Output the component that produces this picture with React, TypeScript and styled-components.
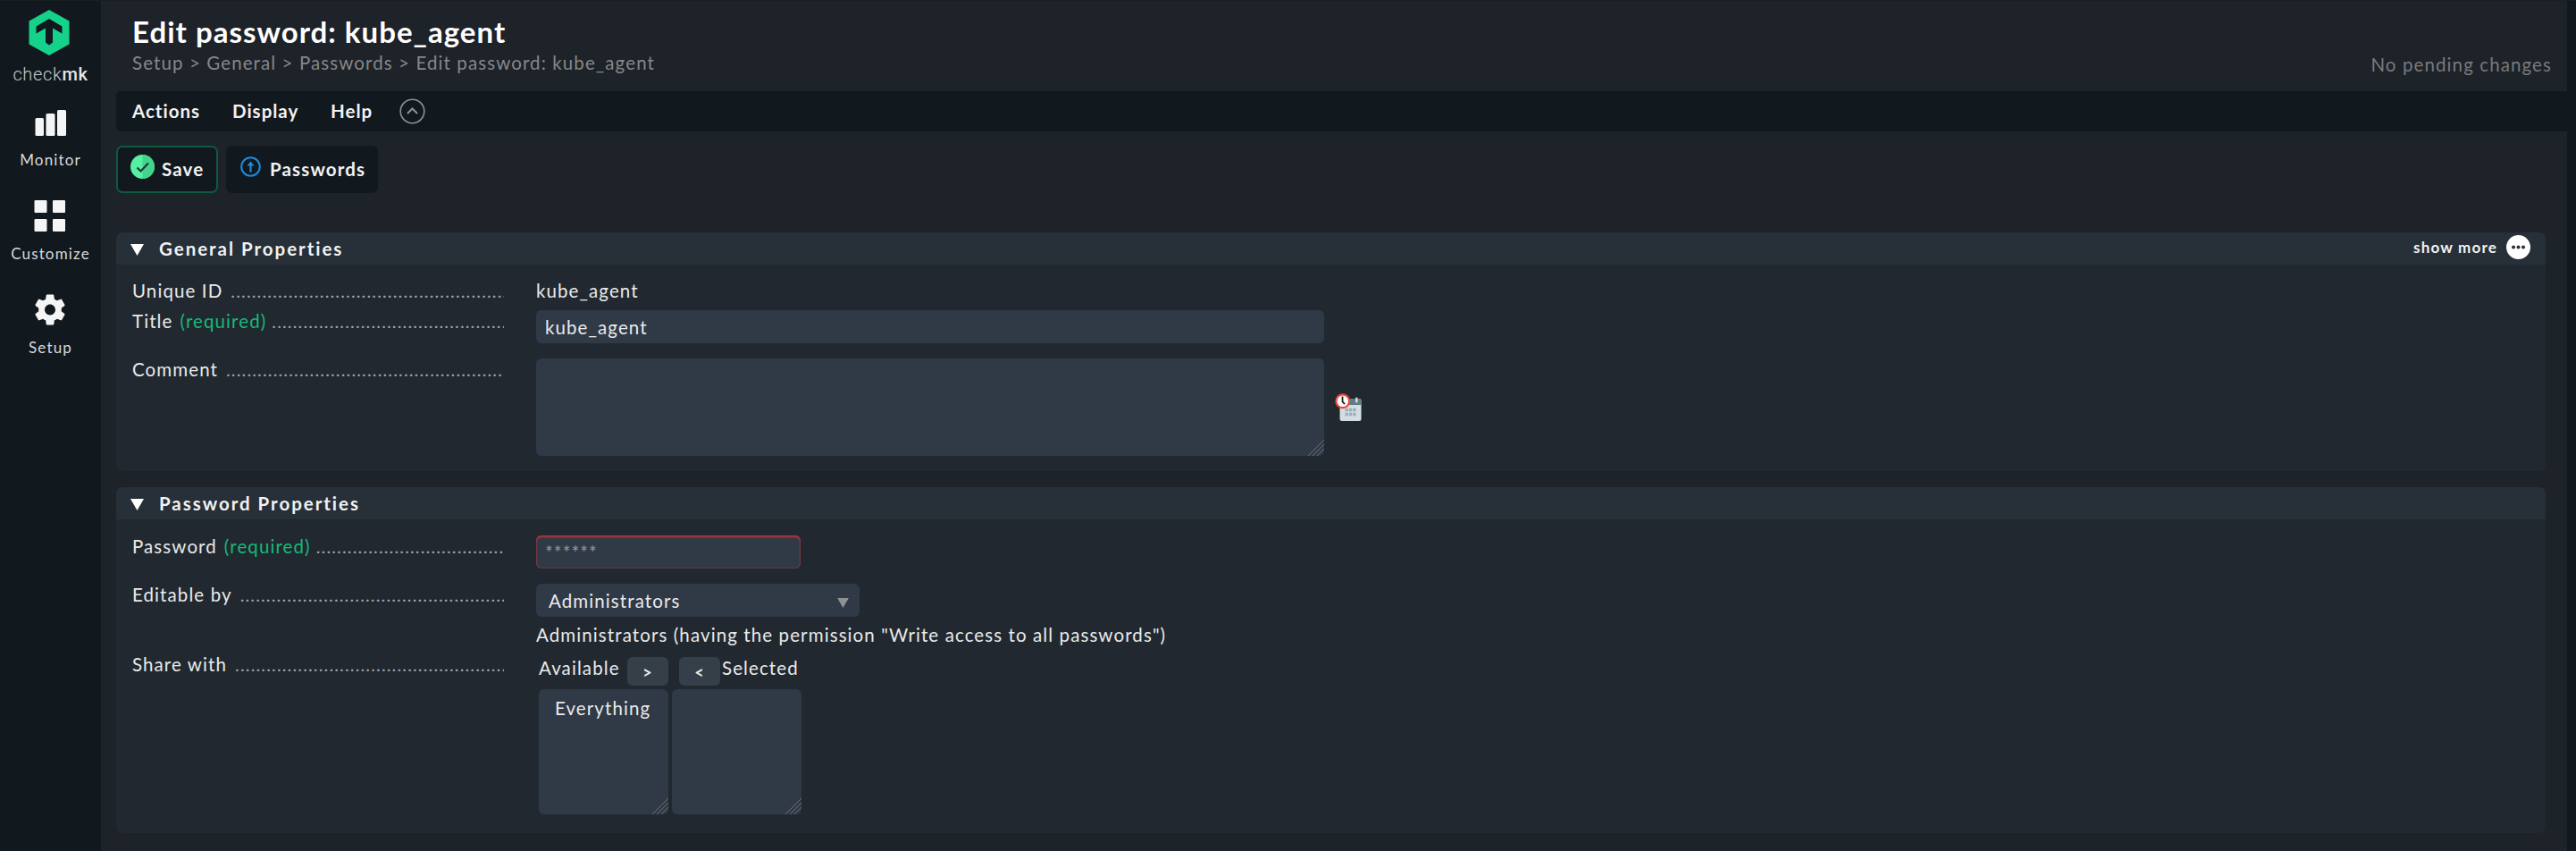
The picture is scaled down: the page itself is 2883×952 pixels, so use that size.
import React from 'react';
import styled, { createGlobalStyle } from 'styled-components';

const GlobalStyle = createGlobalStyle`
  * { box-sizing: border-box; }
  body {
    margin: 0;
    background: #11181e;
    color: #e8eaeb;
    font: 400 20.5px/24px Lato, sans-serif;
    letter-spacing: 1.1px;
  }
  input, select, textarea, button { font: inherit; letter-spacing: inherit; color: inherit; margin: 0; }
`;

const Page = styled.div`
  display: flex;
  height: 952px;
  border-top: 1px solid #1b1f22;
  overflow: hidden;
`;

const Sidebar = styled.nav`
  width: 113px;
  flex: none;
  display: flex;
  flex-direction: column;
  align-items: center;
  background: #11181e;
`;

const Logo = styled.div`
  height: 115px;
  padding-top: 10px;
  display: flex;
  flex-direction: column;
  align-items: center;
  svg { display: block; margin-right: 3px; }
`;

const Wordmark = styled.div`
  margin-top: 9px;
  font: 300 20px/24px Roboto, sans-serif;
  letter-spacing: 0.65px;
  color: #c9cccd;
  b { font-weight: 500; color: #e6e6e6; }
`;

const NavItem = styled.a`
  height: 105px;
  display: flex;
  flex-direction: column;
  align-items: center;
  font-size: 17px;
  line-height: 20px;
  letter-spacing: 1.15px;
  color: #d8dadb;
  svg { display: block; margin-bottom: 12px; }
`;

const Main = styled.main`
  flex: 1;
  min-width: 0;
  display: flex;
  flex-direction: column;
  margin-right: 10px;
  padding-left: 17px;
  background: #1e2229;
`;

const Header = styled.header`
  height: 101px;
  flex: none;
  display: flex;
  justify-content: space-between;
  padding: 14px 17px 0 18px;
`;

const PageTitle = styled.h1`
  margin: 0;
  font-size: 33px;
  line-height: 40px;
  font-weight: 700;
  letter-spacing: 1.02px;
  color: #fff;
`;

const Breadcrumb = styled.div`
  margin-top: 3px;
  color: #85888a;
`;

const Pending = styled.div`
  margin-top: 45px;
  color: #777b7d;
`;

const MenuBar = styled.div`
  height: 45px;
  flex: none;
  display: flex;
  align-items: center;
  padding: 0 18px;
  margin-right: -10px;
  border-radius: 5px 0 0 5px;
  background: #11181e;
  font-weight: 700;
  color: #f2f2f2;
  svg { display: block; }
`;

const MenuEntry = styled.span<{ $width: number }>`
  width: ${(p) => p.$width}px;
  margin-top: -1px;
  letter-spacing: 1px;
`;

const Buttons = styled.div`
  display: flex;
  gap: 9px;
  padding-top: 16px;
  height: 113px;
  flex: none;
`;

const ShortcutButton = styled.a<{ $primary?: boolean }>`
  width: ${(p) => (p.$primary ? 114 : 170)}px;
  height: 53px;
  display: flex;
  align-items: flex-start;
  gap: ${(p) => (p.$primary ? 8 : 10)}px;
  padding: ${(p) => (p.$primary ? '8px 0 0 14px' : '10px 0 0 14px')};
  border: 2px solid ${(p) => (p.$primary ? '#0e5a40' : '#11181e')};
  border-radius: 7px;
  background: #11181e;
  font-weight: 700;
  letter-spacing: 1.15px;
  color: #f2f2f2;
  span { margin-top: ${(p) => (p.$primary ? 4 : 2)}px; }
`;

const Section = styled.section<{ $height: number }>`
  width: 2719px;
  height: ${(p) => p.$height}px;
  flex: none;
  margin-bottom: 18px;
  border-radius: 7px;
  overflow: hidden;
  background: #21282f;
`;

const SectionHead = styled.div`
  height: 36px;
  display: flex;
  align-items: center;
  padding: 0 17px 0 16px;
  background: #272f38;
  svg { display: block; }
  > svg { margin-top: 3px; }
`;

const SectionTitle = styled.h2`
  margin: 0 auto 0 17px;
  font-size: 20.5px;
  line-height: 24px;
  font-weight: 700;
  letter-spacing: 1.97px;
  color: #f2f2f2;
`;

const ShowMore = styled.div`
  display: flex;
  align-items: center;
  gap: 10px;
  font-size: 17px;
  font-weight: 700;
  letter-spacing: 1.18px;
  margin-top: -3px;
  color: #f2f2f2;
`;

const Rows = styled.div<{ $top: number }>`
  display: flex;
  flex-direction: column;
  padding: ${(p) => p.$top}px 0 0 18px;
`;

const Row = styled.div<{ $gap: number }>`
  display: flex;
  align-items: flex-start;
  margin-bottom: ${(p) => p.$gap}px;
`;

const Legend = styled.div`
  width: 416px;
  margin-right: 36px;
  flex: none;
  display: flex;
  white-space: nowrap;
`;

const Required = styled.span`
  margin-left: 8px;
  color: #17b978;
`;

const Dots = styled.span<{ $gap: number }>`
  flex: 1;
  overflow: hidden;
  margin-left: ${(p) => p.$gap}px;
  font-size: 20px;
  letter-spacing: 1.13px;
  color: #a2a5a7;
`;

const TextInput = styled.input<{ $width: number }>`
  display: block;
  width: ${(p) => p.$width}px;
  height: 37px;
  padding: 0 0 0 10px;
  border: 0;
  border-radius: 6px;
  outline: 0;
  background: #303946;
`;

const PasswordInput = styled(TextInput)`
  box-shadow: inset 0 2px 2px #b5363b, inset 0 0 2px #c04045;
  &::placeholder { color: #92979c; opacity: 1; }
`;

const Resizable = styled.div<{ $w: number; $h: number }>`
  display: flex;
  width: ${(p) => p.$w}px;
  height: ${(p) => p.$h}px;
  padding: 9px 0 0 18px;
  border-radius: 6px;
  overflow: hidden;
  background: #303946;
  span { flex: 1; }
  svg { display: block; flex: none; align-self: flex-end; margin-left: -18px; }
`;

const CommentCell = styled.div`
  display: flex;
  align-items: center;
  gap: 12px;
  svg { display: block; }
`;

const Dropdown = styled.div`
  width: 362px;
  height: 37px;
  display: flex;
  align-items: center;
  justify-content: space-between;
  padding: 0 12px 0 14px;
  border-radius: 6px;
  background: #303946;
  svg { display: block; margin-top: 6px; }
`;

const Note = styled.div`
  margin-top: 8px;
`;

const Transfer = styled.div`
  display: grid;
  grid-template-columns: 145px 145px;
  column-gap: 4px;
  padding: 4px 0 0 3px;
`;

const TransferHead = styled.div<{ $offset?: number }>`
  height: 36px;
  display: flex;
  align-items: flex-start;
  padding-left: ${(p) => p.$offset ?? 0}px;
  white-space: nowrap;
`;

const MoveButton = styled.button<{ $before?: boolean }>`
  width: 46px;
  height: 32px;
  flex: none;
  padding: 1px 0 0;
  margin-left: ${(p) => (p.$before ? 0 : 'auto')};
  margin-right: ${(p) => (p.$before ? 2 : 0)}px;
  border: 0;
  border-radius: 6px;
  background: #343f49;
  font-size: 18px;
  font-weight: 700;
  line-height: 28px;
`;

const Grip = () => (
  <svg width="18" height="18" viewBox="0 0 18 18" stroke="#6b7078" strokeWidth="1">
    <path d="M-1 19L19 -1M4 19L19 4M9 19L19 9M14 19L19 14" />
  </svg>
);

const Triangle = ({ w = 15, h = 13, fill = '#fff' }) => (
  <svg width={w} height={h} viewBox="0 0 15 13">
    <path d="M0 0H15L7.5 13Z" fill={fill} />
  </svg>
);

type LabelProps = { text: string; dots: number; required?: boolean };

const Label = ({ text, dots, required }: LabelProps) => (
  <Legend>
    {text}
    {required && <Required>(required)</Required>}
    <Dots $gap={required ? 6 : 9} aria-hidden>{'.'.repeat(dots)}</Dots>
  </Legend>
);

export default function App() {
  return (
    <Page>
      <GlobalStyle />
      <Sidebar>
        <Logo>
          <svg width="46" height="51" viewBox="0 0 46 51">
            <path d="M23 0L45.5 12.5V38.5L23 51L.5 38.5V12.5Z" fill="#15d18a" />
            <path d="M23 10L37.5 18.5V26.5L27 20.5V36.5L23 39.5L19 36.5V20.5L8.5 26.5V18.5Z" fill="#11181e" />
          </svg>
          <Wordmark>check<b>mk</b></Wordmark>
        </Logo>
        <NavItem>
          <svg width="36" height="41" viewBox="0 0 36 41" fill="#f5f5f5">
            <rect x="0.5" y="16" width="9.5" height="20" rx="1.5" />
            <rect x="12.5" y="11" width="10" height="25" rx="1.5" />
            <rect x="25" y="7" width="10" height="29" rx="1.5" />
          </svg>
          Monitor
        </NavItem>
        <NavItem>
          <svg width="36" height="41" viewBox="0 0 36 41" fill="#f5f5f5">
            <rect x="0.5" y="3" width="14" height="14" rx="1" />
            <rect x="21" y="3" width="14" height="14" rx="1" />
            <rect x="0.5" y="24" width="14" height="14" rx="1" />
            <rect x="21" y="24" width="14" height="14" rx="1" />
          </svg>
          Customize
        </NavItem>
        <NavItem>
          <svg width="42" height="41" viewBox="0 0 24 24" fill="#f5f5f5">
            <path d="M19.43 12.98c.04-.32.07-.64.07-.98s-.03-.66-.07-.98l2.11-1.65c.19-.15.24-.42.12-.64l-2-3.46c-.12-.22-.39-.3-.61-.22l-2.49 1c-.52-.4-1.08-.73-1.69-.98l-.38-2.65C14.46 2.18 14.25 2 14 2h-4c-.25 0-.46.18-.49.42l-.38 2.65c-.61.25-1.17.59-1.69.98l-2.49-1c-.23-.09-.49 0-.61.22l-2 3.46c-.13.22-.07.49.12.64l2.11 1.65c-.04.32-.07.65-.07.98s.03.66.07.98l-2.11 1.65c-.19.15-.24.42-.12.64l2 3.46c.12.22.39.3.61.22l2.49-1c.52.4 1.08.73 1.69.98l.38 2.65c.03.24.24.42.49.42h4c.25 0 .46-.18.49-.42l.38-2.65c.61-.25 1.17-.59 1.69-.98l2.49 1c.23.09.49 0 .61-.22l2-3.46c.12-.22.07-.49-.12-.64l-2.11-1.65zM12 15.5c-1.93 0-3.5-1.57-3.5-3.5s1.57-3.5 3.5-3.5 3.5 1.57 3.5 3.5-1.57 3.5-3.5 3.5z" />
          </svg>
          Setup
        </NavItem>
      </Sidebar>

      <Main>
        <Header>
          <div>
            <PageTitle>Edit password: kube_agent</PageTitle>
            <Breadcrumb>Setup &gt; General &gt; Passwords &gt; Edit password: kube_agent</Breadcrumb>
          </div>
          <Pending>No pending changes</Pending>
        </Header>

        <MenuBar>
          <MenuEntry $width={112}>Actions</MenuEntry>
          <MenuEntry $width={110}>Display</MenuEntry>
          <MenuEntry $width={77}>Help</MenuEntry>
          <svg width="29" height="29" viewBox="0 0 29 29" fill="none" stroke="#8f9294" strokeWidth="1.6">
            <circle cx="14.5" cy="14.5" r="13.3" />
            <path d="M9 17L14.5 11.5L20 17" strokeWidth="2" />
          </svg>
        </MenuBar>

        <Buttons>
          <ShortcutButton $primary>
            <svg width="27" height="27" viewBox="0 0 27 27">
              <circle cx="13.5" cy="13.5" r="13.5" fill="#55f0a4" />
              <path d="M13.5 0a13.5 13.5 0 0 1 0 27Z" fill="#43d38a" />
              <path d="M7.5 14.5L11.5 18.5L20 9.5" fill="none" stroke="#1c3a35" strokeWidth="2.2" />
            </svg>
            <span>Save</span>
          </ShortcutButton>
          <ShortcutButton>
            <svg width="23" height="23" viewBox="0 0 23 23" fill="none" stroke="#1c8be0">
              <circle cx="11.5" cy="11.5" r="10.3" strokeWidth="2" />
              <path d="M11.5 17.5V9" strokeWidth="2.2" />
              <path d="M7.5 10.5L11.5 5.5L15.5 10.5Z" fill="#1c8be0" stroke="none" />
            </svg>
            <span>Passwords</span>
          </ShortcutButton>
        </Buttons>

        <Section $height={267}>
          <SectionHead>
            <Triangle />
            <SectionTitle>General Properties</SectionTitle>
            <ShowMore>
              show more
              <svg width="27" height="27" viewBox="0 0 27 27">
                <circle cx="13.5" cy="13.5" r="13.5" fill="#fff" />
                <g fill="#272f38">
                  <circle cx="8" cy="13.5" r="2" />
                  <circle cx="13.5" cy="13.5" r="2" />
                  <circle cx="19" cy="13.5" r="2" />
                </g>
              </svg>
            </ShowMore>
          </SectionHead>
          <Rows $top={17}>
            <Row $gap={10}>
              <Label text="Unique ID" dots={53} />
              <span>kube_agent</span>
            </Row>
            <Row $gap={17}>
              <Label text="Title" required dots={45} />
              <TextInput $width={882} defaultValue="kube_agent" />
            </Row>
            <Row $gap={0}>
              <Label text="Comment" dots={54} />
              <CommentCell>
                <Resizable $w={882} $h={109}><span /><Grip /></Resizable>
                <svg width="30" height="32" viewBox="0 0 30 32">
                  <rect x="5.5" y="6" width="24" height="25" rx="2.5" fill="#d3dde2" />
                  <path d="M5.5 13V8.5a2.5 2.5 0 0 1 2.5-2.5H27a2.5 2.5 0 0 1 2.5 2.5V13Z" fill="#607d86" />
                  <rect x="23" y="4.5" width="2.5" height="6" rx="1.2" fill="#d3dde2" />
                  <path d="M11.5 18.5H23.5M11.5 23.5H23.5" stroke="#9db1ba" strokeWidth="3.6" strokeDasharray="3.4 0.9" />
                  <circle cx="8.7" cy="8.7" r="7.4" fill="#fff" stroke="#ee4438" strokeWidth="2.2" />
                  <path d="M8.5 3.5V9.5L11 12" fill="none" stroke="#222" strokeWidth="1.8" />
                </svg>
              </CommentCell>
            </Row>
          </Rows>
        </Section>

        <Section $height={387}>
          <SectionHead>
            <Triangle />
            <SectionTitle>Password Properties</SectionTitle>
          </SectionHead>
          <Rows $top={18}>
            <Row $gap={17}>
              <Label text="Password" required dots={36} />
              <PasswordInput $width={296} placeholder="******" />
            </Row>
            <Row $gap={9}>
              <Label text="Editable by" dots={51} />
              <div>
                <Dropdown>Administrators<Triangle w={13} h={11} fill="#8f9294" /></Dropdown>
                <Note>Administrators (having the permission "Write access to all passwords")</Note>
              </div>
            </Row>
            <Row $gap={0}>
              <Label text="Share with" dots={52} />
              <Transfer>
                <TransferHead>Available<MoveButton>&gt;</MoveButton></TransferHead>
                <TransferHead $offset={8}><MoveButton $before>&lt;</MoveButton>Selected</TransferHead>
                <Resizable $w={145} $h={140}><span>Everything</span><Grip /></Resizable>
                <Resizable $w={145} $h={140}><span /><Grip /></Resizable>
              </Transfer>
            </Row>
          </Rows>
        </Section>
      </Main>
    </Page>
  );
}
